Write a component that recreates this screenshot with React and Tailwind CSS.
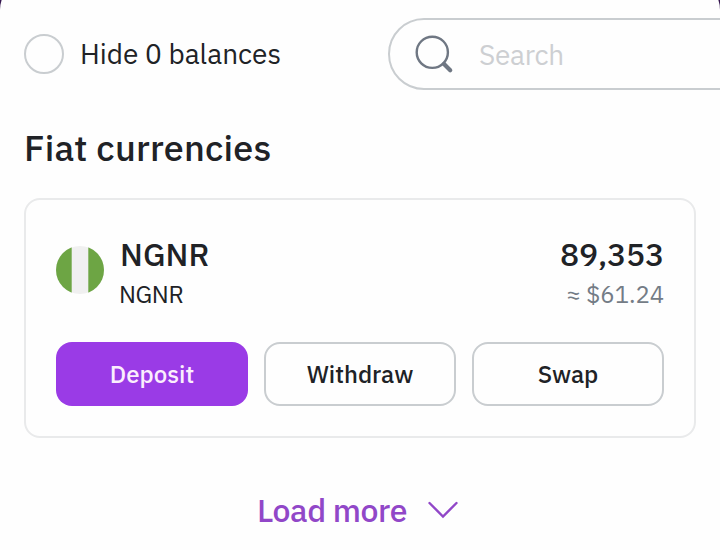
const assets = [
  { code: 'NGNR', name: 'NGNR', balance: '89,353', usd: '≈ $61.24' },
]

function NigeriaFlag() {
  return (
    <svg className="w-12 h-12 mr-4 shrink-0" viewBox="0 0 48 48">
      <clipPath id="flag-circle">
        <circle cx="24" cy="24" r="24" />
      </clipPath>
      <g clipPath="url(#flag-circle)">
        <rect width="48" height="48" fill="#f0f0f0" />
        <rect width="15.7" height="48" fill="#6da544" />
        <rect x="32.3" width="15.7" height="48" fill="#6da544" />
      </g>
    </svg>
  )
}

function SearchIcon() {
  return (
    <svg className="w-10 h-10 shrink-0" viewBox="0 0 40 40" fill="none" stroke="#6f7783">
      <circle cx="18.3" cy="18.3" r="15.6" strokeWidth="2.4" />
      <path d="M30 30l6.2 6.2" strokeWidth="4.2" strokeLinecap="round" />
    </svg>
  )
}

function AssetCard({ asset }) {
  return (
    <div className="h-60 rounded-2xl border-2 border-[#e9eaeb] px-[30px] pt-[34px]">
      <div className="flex h-[78px] items-start">
        <div className="pt-3">
          <NigeriaFlag />
        </div>
        <div className="flex-1 whitespace-nowrap">
          <p className="h-[42px] text-[32px] leading-10 font-medium tracking-[0.1px]">{asset.code}</p>
          <p className="h-9 text-[24px] leading-9 -ml-px tracking-[-0.4px]">{asset.name}</p>
        </div>
        <div className="text-right whitespace-nowrap">
          <p className="h-[42px] text-[32px] leading-10 font-medium tracking-[-0.2px]">{asset.balance}</p>
          <p className="h-9 text-[24px] leading-9 tracking-[-0.1px] text-[#747c86]">{asset.usd}</p>
        </div>
      </div>

      {/* Actions */}
      <div className="mt-[30px] grid h-16 grid-cols-3 gap-4 text-[24px] font-medium">
        <button className="rounded-2xl bg-[#9a3be6] text-[#fbeefd]">Deposit</button>
        <button className="rounded-2xl border-2 border-[#c9cdd0]">Withdraw</button>
        <button className="rounded-2xl border-2 border-[#c9cdd0]">Swap</button>
      </div>
    </div>
  )
}

export default function App() {
  return (
    <div className="h-[550px] w-[720px] overflow-hidden bg-[#35164f] font-['IBM_Plex_Sans',Roboto,sans-serif] text-[#202226]">
      <div className="-mt-[22px] h-[572px] rounded-t-[32px] bg-[#fefefe] pt-10">
        {/* Filter row, the search field runs past the right edge */}
        <div className="flex h-[72px] items-center pl-6">
          <label className="flex w-[364px] shrink-0 items-center gap-4 text-[28px] whitespace-nowrap">
            <span className="h-10 w-10 rounded-full border-2 border-[#c9cdd0]" />
            Hide 0 balances
          </label>
          <div className="flex h-[72px] w-[420px] shrink-0 items-center rounded-full border-2 border-[#c9cdd0] pl-6">
            <SearchIcon />
            <span className="ml-[25px] pt-0.5 text-[28px] tracking-[-0.3px] text-[#cdcfd2]">Search</span>
          </div>
        </div>

        <div className="px-6">
          <h2 className="mt-[35px] mb-[27px] h-[46px] text-[36px] leading-[46px] font-medium tracking-[0.2px] whitespace-nowrap">
            Fiat currencies
          </h2>
          {assets.map((asset) => (
            <AssetCard key={asset.code} asset={asset} />
          ))}
        </div>

        <button className="mx-auto mt-[52px] flex h-10 items-center text-[32px] leading-10 font-medium text-[#9147c8]">
          <span className="tracking-[-0.45px]">Load more</span>
          <svg className="ml-5 mr-1 h-8 w-8" viewBox="0 0 32 32" fill="none" stroke="currentColor" strokeWidth="2.4" strokeLinecap="round">
            <path d="M2.5 9L16 22.5L29.5 9" />
          </svg>
        </button>
      </div>
    </div>
  )
}
